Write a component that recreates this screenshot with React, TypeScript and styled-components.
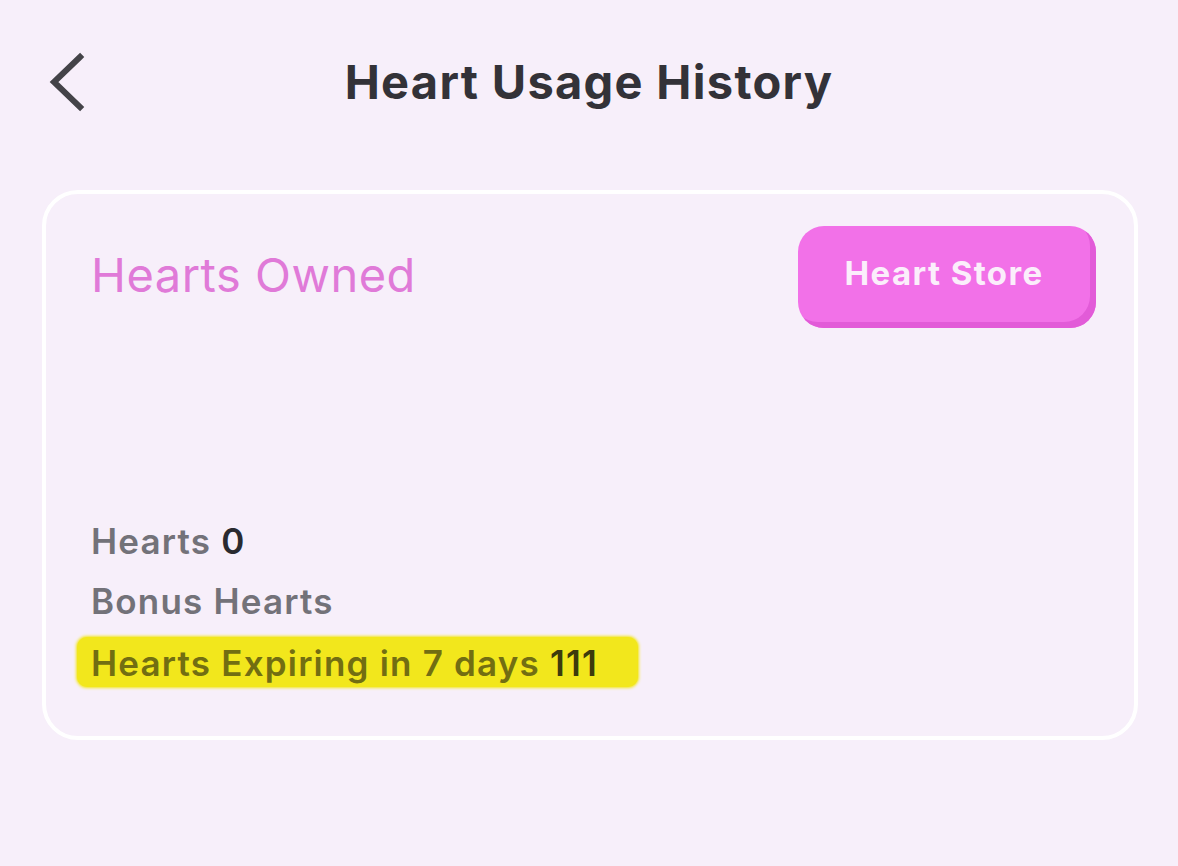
import styled, { createGlobalStyle } from "styled-components";

const GlobalStyle = createGlobalStyle`
  html, body {
    margin: 0;
    padding: 0;
    background: #f7effa;
  }
  body {
    font-family: Inter, "Noto Sans", sans-serif;
    width: 1178px;
    height: 866px;
    overflow: hidden;
  }
`;

const Page = styled.div`
  display: flex;
  flex-direction: column;
  padding: 0 40px;
`;

const Header = styled.div`
  position: relative;
  display: flex;
  align-items: center;
  justify-content: center;
  height: 164px;
`;

const BackButton = styled.button`
  position: absolute;
  left: 4px;
  top: 52px;
  background: none;
  border: none;
  padding: 0;
  cursor: pointer;
  display: flex;
`;

const Title = styled.h1`
  margin: 0;
  margin-top: -2px;
  font-size: 47px;
  font-weight: 700;
  color: #333238;
  letter-spacing: 1.3px;
`;

const Card = styled.div`
  margin: 26px 0 0 2px;
  width: 1096px;
  height: 550px;
  box-sizing: border-box;
  border: 4px solid #ffffff;
  border-radius: 36px;
  padding: 32px 38px 0 45px;
  display: flex;
  flex-direction: column;
`;

const TopRow = styled.div`
  display: flex;
  justify-content: space-between;
  align-items: flex-start;
`;

const OwnedLabel = styled.div`
  margin-top: 20px;
  font-size: 47px;
  font-weight: 400;
  color: #e07ad8;
  letter-spacing: 0.5px;
`;

const StoreButton = styled.button`
  width: 298px;
  height: 102px;
  border: none;
  border-radius: 26px;
  background: #f271e8;
  box-shadow: inset -6px -6px 0 #e25bd8;
  color: #fbeefb;
  font-family: inherit;
  font-size: 33px;
  font-weight: 700;
  letter-spacing: 1.4px;
  padding: 0 6px 8px 0;
  cursor: pointer;
`;

const Stats = styled.div`
  margin-top: 189px;
  display: flex;
  flex-direction: column;
  gap: 12px;
`;

const StatRow = styled.div<{ $highlight?: boolean }>`
  align-self: flex-start;
  font-size: 35px;
  font-weight: 600;
  letter-spacing: 1.2px;
  line-height: 48px;
  color: ${(p) => (p.$highlight ? "#726e12" : "#737279")};
  background: ${(p) => (p.$highlight ? "#f2e71c" : "transparent")};
  box-shadow: ${(p) => (p.$highlight ? "0 0 3px 1px #f2e71c" : "none")};
  border-radius: ${(p) => (p.$highlight ? "10px" : "0")};
  margin-left: ${(p) => (p.$highlight ? "-14px" : "0")};
  padding: ${(p) => (p.$highlight ? "2px 40px 0 14px" : "0")};
`;

const Value = styled.span<{ $highlight?: boolean }>`
  color: ${(p) => (p.$highlight ? "#3d3b0c" : "#2a2a30")};
`;

export default function App() {
  return (
    <>
      <GlobalStyle />
      <Page>
        <Header>
          <BackButton aria-label="Back">
            <svg width="44" height="60" viewBox="0 0 44 60" fill="none">
              <path
                d="M36 5 L10 30 L36 55"
                stroke="#444348"
                strokeWidth="6"
                strokeLinecap="square"
              />
            </svg>
          </BackButton>
          <Title>Heart Usage History</Title>
        </Header>
        <Card>
          <TopRow>
            <OwnedLabel>Hearts Owned</OwnedLabel>
            <StoreButton>Heart Store</StoreButton>
          </TopRow>
          <Stats>
            <StatRow>
              Hearts <Value>0</Value>
            </StatRow>
            <StatRow>Bonus Hearts</StatRow>
            <StatRow $highlight>
              Hearts Expiring in 7 days <Value $highlight>111</Value>
            </StatRow>
          </Stats>
        </Card>
      </Page>
    </>
  );
}
